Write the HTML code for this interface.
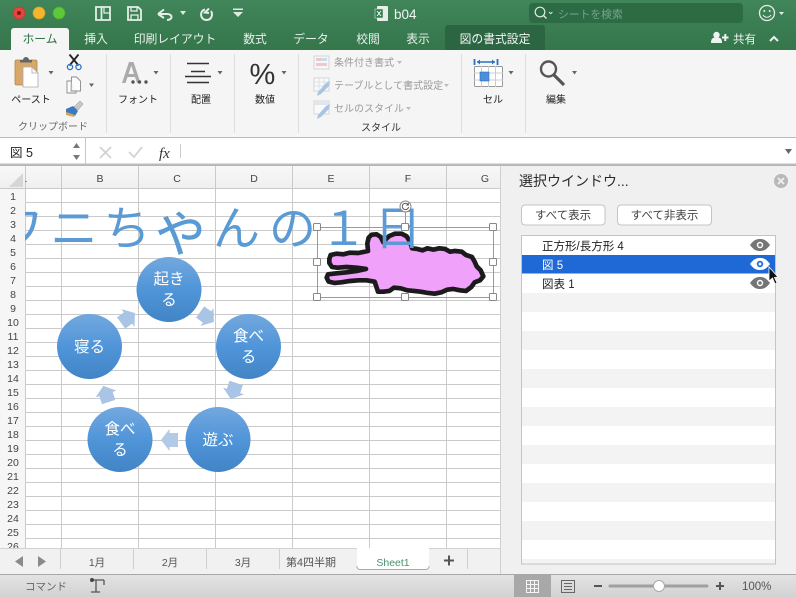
<!DOCTYPE html>
<html lang="ja"><head><meta charset="utf-8"><title>b04</title>
<style>
html,body{margin:0;padding:0;background:#f0f0f0;width:796px;height:597px;overflow:hidden}
svg{display:block}
text{font-family:"Liberation Sans","Noto Sans CJK JP",sans-serif;font-size:11px;fill:#222}
.tab{font-size:11.8px;fill:#e8f1ea;text-anchor:middle}
.lab{font-size:10px;fill:#222;text-anchor:middle}
.hd{font-size:10.5px;fill:#444;text-anchor:middle}
.rn{font-size:10.5px;fill:#444;text-anchor:middle}
.st{font-size:10px;fill:#9a9a9a}
.c{font-size:15.5px;fill:#fff;text-anchor:middle}
.sh{font-size:10.5px;fill:#555;text-anchor:middle}
.w{fill:#5b9bd5;font-size:47px}
</style></head><body>
<svg width="796" height="597" viewBox="0 0 796 597" xmlns="http://www.w3.org/2000/svg">
<defs>
<linearGradient id="tb" x1="0" y1="0" x2="0" y2="1"><stop offset="0" stop-color="#41855a"/><stop offset="1" stop-color="#35764b"/></linearGradient>
<linearGradient id="cg" x1="0" y1="0" x2="0" y2="1"><stop offset="0" stop-color="#73a8de"/><stop offset=".5" stop-color="#5095d9"/><stop offset="1" stop-color="#4285c6"/></linearGradient>
<linearGradient id="sb" x1="0" y1="0" x2="0" y2="1"><stop offset="0" stop-color="#e4e4e4"/><stop offset="1" stop-color="#d2d2d2"/></linearGradient>
<linearGradient id="hdr" x1="0" y1="0" x2="0" y2="1"><stop offset="0" stop-color="#f8f8f8"/><stop offset="1" stop-color="#efefef"/></linearGradient>
<clipPath id="gridclip"><rect x="25" y="188" width="475" height="360"/></clipPath>
<path id="eye" d="M-10 0C-6-5.500-3-6 0-6S6-5.500 10 0C6 5.500 3 6 0 6S-6 5.500-10 0Z"/>
<path id="arr" d="M-8.500-7H0V-11L8.500 0 0 11V7H-8.500Z"/>
</defs>

<!-- title bar -->
<rect width="796" height="50" fill="url(#tb)"/>
<circle cx="19" cy="13" r="6" fill="#e2463f" stroke="#c8362f" stroke-width=".7"/><circle cx="19" cy="13" r="2" fill="#7d1a14"/>
<circle cx="39" cy="13" r="6" fill="#f5b52f" stroke="#d89c22" stroke-width=".7"/>
<circle cx="59" cy="13" r="6" fill="#5ec83c" stroke="#4aa92e" stroke-width=".7"/>
<g fill="none" stroke="#e4efe7" stroke-width="1.800">
<path d="M96 7H110V20H96Z"/><path d="M101.500 7V20" /><path d="M104 7V13H110" stroke-width="1.200"/>
<path d="M128 7H138L141 10V20H128Z"/><path d="M131 7V11H137V7M131 20V15H138V20" stroke-width="1.300"/>
<path d="M158 14L164 9.500M158 14L164 18M158 14H167C173 14 173 20 167 20" stroke-width="2"/>
<path d="M209 8.500L205 12.500 209 13M205 9.500C199 11 200 20 206.500 20 212 20 213 14 211 11" stroke-width="2"/>
</g>
<path d="M180 11h6l-3 4zM233 12h10l-5 5zM233 8.500h10v1.500h-10z" fill="#dfeae2"/>
<g><rect x="377" y="6" width="11" height="15" rx="1" fill="#e8efe9"/><rect x="375" y="9" width="8" height="9" fill="#2d7a4a" stroke="#d8e6dc" stroke-width=".6"/><path d="M377 11l4 5M381 11l-4 5" stroke="#fff" stroke-width="1"/></g>
<text x="394" y="19" style="font-size:13.500px;fill:#f1f6f2">b04</text>
<rect x="529" y="3" width="214" height="20" rx="4" fill="#2d6b45"/>
<circle cx="540" cy="12" r="4.800" fill="none" stroke="#dfeae2" stroke-width="1.200"/><path d="M543.500 15.500l3 3" stroke="#dfeae2" stroke-width="1.300"/><path d="M549 12l1.700 1.700 1.700-1.700" stroke="#dfeae2" fill="none"/>
<text x="558" y="18" style="font-size:10.800px;fill:#74a68a">シートを検索</text>
<circle cx="767" cy="13" r="7.500" fill="none" stroke="#e4efe7" stroke-width="1.300"/><circle cx="764.300" cy="11" r="1" fill="#e4efe7"/><circle cx="769.700" cy="11" r="1" fill="#e4efe7"/><path d="M763 15c2 3 6 3 8 0" fill="none" stroke="#e4efe7" stroke-width="1.100"/>
<path d="M779 12h5l-2.500 3z" fill="#e4efe7"/>

<!-- tabs -->
<path d="M11 50V31a3 3 0 0 1 3-3H66a3 3 0 0 1 3 3V50Z" fill="#f5f5f5"/>
<path d="M445 50V28a3 3 0 0 1 3-3H542a3 3 0 0 1 3 3V50Z" fill="#2c6541"/>
<text x="40" y="43" class="tab" style="fill:#2f7149">ホーム</text>
<text x="96" y="43" class="tab">挿入</text>
<text x="175" y="43" class="tab">印刷レイアウト</text>
<text x="255" y="43" class="tab">数式</text>
<text x="311" y="43" class="tab">データ</text>
<text x="368" y="43" class="tab">校閲</text>
<text x="418" y="43" class="tab">表示</text>
<text x="495" y="43" class="tab" style="fill:#f4f8f5">図の書式設定</text>
<circle cx="716.500" cy="35" r="3.200" fill="#eef4f0"/><path d="M711 43c0-5 2-5.500 5.500-5.500s5.500.5 5.500 5.500z" fill="#eef4f0"/><path d="M722 36.500h2.300V34h2v2.500H728.500v2h-2.200V41h-2v-2.500H722z" fill="#eef4f0"/>
<text x="733" y="43" style="font-size:11.500px;fill:#eef4f0">共有</text>
<path d="M770 41l4-4 4 4" fill="none" stroke="#eef4f0" stroke-width="2"/>

<!-- ribbon -->
<rect y="50" width="796" height="87" fill="#f5f5f5"/>
<path d="M0 137.500H796" stroke="#bcbcbc"/>
<g stroke="#dedede"><path d="M106.500 54V133M170.500 54V133M234.500 54V133M298.500 54V133M461.500 54V133M525.500 54V133"/></g>
<!-- paste -->
<rect x="15" y="60" width="22" height="25" rx="1.500" fill="#d8a86a" stroke="#b5854a" stroke-width=".8"/>
<path d="M20 62v-2h3a3 3 0 0 1 6 0h3v2.500H20z" fill="#666"/>
<path d="M23 67h9l6 6v14H23Z" fill="#fff" stroke="#aaa" stroke-width=".8"/><path d="M32 67v6h6" fill="none" stroke="#aaa" stroke-width=".8"/>
<path d="M48.500 71h5l-2.500 3.500z" fill="#666"/>
<text x="31" y="103" class="lab">ペースト</text>
<path d="M69.500 54.500l9 11M78.500 54.500l-9 11" stroke="#222" stroke-width="1.800"/>
<circle cx="70" cy="67" r="2.600" fill="none" stroke="#2c6fc0" stroke-width="1.300"/><circle cx="78.500" cy="67" r="2.600" fill="none" stroke="#2c6fc0" stroke-width="1.300"/>
<path d="M71.500 77h5l4 4v10h-9.500zM71 81h-4v12h9v-2" fill="#fdfdfd" stroke="#8a8a8a" stroke-width=".9"/>
<path d="M89 83.500h5l-2.500 3.500z" fill="#666"/>
<path d="M74 107l6-6 3 3-5 6z" fill="#c9c9c9" stroke="#888" stroke-width=".5"/><path d="M66 109l7-3 5 5-3 5-9-2z" fill="#3b79c4"/><path d="M66 112l9 3-1 2-8-2z" fill="#d4a55d"/>
<text x="53" y="130" class="lab" style="fill:#666">クリップボード</text>
<!-- font -->
<path d="M122 83L129 62H133.500L140.500 83H137L135 77H127.500L125.500 83ZM128.500 74H134L131.300 65.500Z" fill="#aaa" fill-rule="evenodd"/>
<circle cx="133" cy="82" r="1.700" fill="#555"/><circle cx="139.500" cy="82" r="1.700" fill="#555"/><circle cx="146" cy="82" r="1.700" fill="#555"/>
<path d="M153.500 71h5l-2.500 3.500z" fill="#666"/>
<text x="138" y="103" class="lab">フォント</text>
<!-- align -->
<path d="M187 63.500H209M191 71.500H205M185 76.500H211M187 82.500H209" stroke="#333" stroke-width="1.500"/>
<path d="M217.500 71h5l-2.500 3.500z" fill="#666"/>
<text x="201" y="103" class="lab">配置</text>
<!-- pct -->
<text x="249.500" y="84" style="font-size:29px;fill:#333">%</text>
<path d="M281.500 71h5l-2.500 3.500z" fill="#666"/>
<text x="265" y="103" class="lab">数値</text>
<!-- styles -->
<g opacity=".55">
<rect x="314" y="56" width="15" height="13" fill="#fafafa" stroke="#bbb"/><path d="M316 58h6v3h-6zM316 63h11v3h-11z" fill="#e9a6a6"/><path d="M322 58h5v3h-5z" fill="#a9c8e8"/>
<g fill="#fff" stroke="#bbb"><rect x="314" y="78" width="15" height="13"/><rect x="314" y="101" width="15" height="13"/></g>
<path d="M314 82h15M314 86h15M319 78v13M324 78v13" stroke="#c4d4e4" fill="none"/>
<path d="M318 92l8-9 4-2-1 5-8 8-4 2z" fill="#6b9ed3"/>
<path d="M318 115l8-9 4-2-1 5-8 8-4 2z" fill="#6b9ed3"/>
<rect x="315" y="102" width="13" height="3" fill="#c9dcec"/>
</g>
<text x="334" y="66" class="st">条件付き書式</text><path d="M397 61h5l-2.500 3z" fill="#bbb"/>
<text x="334" y="89" class="st">テーブルとして書式設定</text><path d="M444 84h5l-2.500 3z" fill="#bbb"/>
<text x="334" y="112" class="st">セルのスタイル</text><path d="M406 107h5l-2.500 3z" fill="#bbb"/>
<text x="381" y="131" class="lab" style="fill:#333">スタイル</text>
<!-- cell -->
<path d="M474.500 59v6M497.500 59v6" stroke="#2c6fc0" stroke-width="1.800"/><path d="M477 62H495" stroke="#2c6fc0" stroke-width="1.500"/><path d="M480 59.500l-3 2.500 3 2.500zM492 59.500l3 2.500-3 2.500z" fill="#2c6fc0"/>
<rect x="474.500" y="66.500" width="28" height="20" rx="1" fill="#fff" stroke="#999"/><path d="M474 73H503M474 80H503M481.500 66V87M488.500 66V87M495.500 66V87" stroke="#ccc"/>
<rect x="480" y="72" width="9" height="9" fill="#4a8fd8" stroke="#2c6fc0" stroke-width=".6"/>
<path d="M508.500 71h5l-2.500 3.500z" fill="#666"/>
<text x="493" y="103" class="lab">セル</text>
<!-- find -->
<circle cx="548.500" cy="69" r="7.500" fill="none" stroke="#555" stroke-width="2.400"/><path d="M554 75l10 10" stroke="#555" stroke-width="3.200"/>
<path d="M572 71h5l-2.500 3.500z" fill="#666"/>
<text x="556" y="103" class="lab">編集</text>

<!-- formula bar -->
<rect y="138" width="796" height="26" fill="#fff"/>
<path d="M0 164.500H796" stroke="#bcbcbc" stroke-width="2"/>
<path d="M85.500 138V164" stroke="#c8c8c8"/>
<text x="10" y="157" style="font-size:12.500px">図 5</text>
<path d="M73 148l3.500-5 3.500 5zM73 155l3.500 5 3.500-5z" fill="#777"/>
<path d="M100 147l11 11M111 147l-11 11" stroke="#d2d2d2" stroke-width="1.800"/>
<path d="M129 152l5 5 8-10" fill="none" stroke="#d2d2d2" stroke-width="1.800"/>
<text x="159" y="158" style="font-family:'Liberation Serif',serif;font-style:italic;font-size:15px;fill:#333">fx</text>
<path d="M180.500 144V158" stroke="#ccc"/>
<path d="M785 149h7l-3.500 5z" fill="#666"/>

<!-- sheet -->
<rect y="166" width="501" height="382" fill="#fff"/>
<rect y="166" width="501" height="22" fill="url(#hdr)"/>
<rect y="188" width="25" height="360" fill="#f6f6f6"/>
<path d="M9 187L23 173V187Z" fill="#d6d6d6"/>
<path d="M25.500 166V548M61.500 166V548M138.500 166V548M215.500 166V548M292.500 166V548M369.500 166V548M446.500 166V548M500.500 166V548" stroke="#cacaca"/>
<path d="M0 188.500H500M25 202.500H500M25 216.500H500M25 230.500H500M25 244.500H500M25 258.500H500M25 272.500H500M25 286.500H500M25 300.500H500M25 314.500H500M25 328.500H500M25 342.500H500M25 356.500H500M25 370.500H500M25 384.500H500M25 398.500H500M25 412.500H500M25 426.500H500M25 440.500H500M25 454.500H500M25 468.500H500M25 482.500H500M25 496.500H500M25 510.500H500M25 524.500H500M25 538.500H500" stroke="#cacaca"/>
<text x="26" y="182" class="hd">.</text>
<text x="100" y="182" class="hd">B</text><text x="177" y="182" class="hd">C</text><text x="254" y="182" class="hd">D</text><text x="331" y="182" class="hd">E</text><text x="408" y="182" class="hd">F</text><text x="485" y="182" class="hd">G</text>
<g>
<text x="13" y="200" class="rn">1</text><text x="13" y="214" class="rn">2</text><text x="13" y="228" class="rn">3</text><text x="13" y="242" class="rn">4</text><text x="13" y="256" class="rn">5</text><text x="13" y="270" class="rn">6</text><text x="13" y="284" class="rn">7</text><text x="13" y="298" class="rn">8</text><text x="13" y="312" class="rn">9</text><text x="13" y="326" class="rn">10</text><text x="13" y="340" class="rn">11</text><text x="13" y="354" class="rn">12</text><text x="13" y="368" class="rn">13</text><text x="13" y="382" class="rn">14</text><text x="13" y="396" class="rn">15</text><text x="13" y="410" class="rn">16</text><text x="13" y="424" class="rn">17</text><text x="13" y="438" class="rn">18</text><text x="13" y="452" class="rn">19</text><text x="13" y="466" class="rn">20</text><text x="13" y="480" class="rn">21</text><text x="13" y="494" class="rn">22</text><text x="13" y="508" class="rn">23</text><text x="13" y="522" class="rn">24</text><text x="13" y="536" class="rn">25</text><text x="13" y="550" class="rn">26</text>
</g>
<rect y="548" width="501" height="26" fill="#f1f1f1"/>

<!-- pink shape -->
<g transform="translate(300 165) scale(.3333)">
<path d="M92 270L110 266 130 268 150 263 175 264 204 258 202 235 206 218 215 209 230 208 242 216 250 232 258 222 268 213 285 206 305 206 320 214 330 230 336 250 352 252 368 256 382 250 400 254 418 250 435 252 450 260 465 258 485 260 498 270 516 276 524 290 530 304 542 316 550 334 540 346 524 352 514 366 498 378 480 376 460 372 442 374 424 382 404 386 384 384 362 380 342 378 322 376 302 370 282 368 268 378 250 380 234 380 228 362 224 350 200 346 176 346 150 348 124 352 104 354 86 350 80 338 84 328 110 325 140 322 170 318 198 312 170 308 140 306 112 308 96 306 88 294 88 282Z" fill="#f0a1f9" stroke="#1d1a1d" stroke-width="14" stroke-linejoin="round"/>
</g>

<!-- title wordart -->
<g clip-path="url(#gridclip)">
<text x="-3.500" y="245" class="w">ワ</text>
<text x="50.500" y="245" class="w">ニ</text>
<text x="103.500" y="245" class="w">ち</text>
<text x="151" y="250" class="w" style="font-size:60px">ゃ</text>
<text x="213" y="245" class="w">ん</text>
<text x="269" y="245" class="w">の</text>
<text x="320" y="245" class="w">１</text>
<text x="374.500" y="245" class="w">日</text>
</g>

<!-- selection -->
<path d="M405.500 212V228" stroke="#999"/>
<rect x="317.500" y="227.500" width="176" height="70" fill="none" stroke="#9a9a9a"/>
<g fill="#fff" stroke="#888">
<rect x="313.500" y="223.500" width="7" height="7" rx="1"/><rect x="401.500" y="223.500" width="7" height="7" rx="1"/><rect x="489.500" y="223.500" width="7" height="7" rx="1"/>
<rect x="313.500" y="258.500" width="7" height="7" rx="1"/><rect x="489.500" y="258.500" width="7" height="7" rx="1"/>
<rect x="313.500" y="293.500" width="7" height="7" rx="1"/><rect x="401.500" y="293.500" width="7" height="7" rx="1"/><rect x="489.500" y="293.500" width="7" height="7" rx="1"/>
<circle cx="405.500" cy="206.500" r="5.500"/>
</g>
<path d="M408 204.500a3.200 3.200 0 1 0 .6 2.500" fill="none" stroke="#555" stroke-width="1"/><path d="M408.800 202.500v3h-3z" fill="#555"/>

<!-- smartart -->
<use href="#arr" transform="translate(207 317) rotate(36)" fill="#a9c4e4"/>
<use href="#arr" transform="translate(233.500 391) rotate(108)" fill="#a9c4e4"/>
<use href="#arr" transform="translate(169.500 440) rotate(180)" fill="#b0cae8"/>
<use href="#arr" transform="translate(106 394) rotate(252)" fill="#a9c4e4"/>
<use href="#arr" transform="translate(128 318) rotate(324)" fill="#a9c4e4"/>
<circle cx="169" cy="289.500" r="32.500" fill="url(#cg)"/>
<circle cx="248.500" cy="346.500" r="32.500" fill="url(#cg)"/>
<circle cx="218" cy="439.500" r="32.500" fill="url(#cg)"/>
<circle cx="120" cy="439.500" r="32.500" fill="url(#cg)"/>
<circle cx="89.500" cy="346.500" r="32.500" fill="url(#cg)"/>
<text x="169" y="284" class="c">起き</text><text x="169" y="305" class="c">る</text>
<text x="248.500" y="341" class="c">食べ</text><text x="248.500" y="362" class="c">る</text>
<text x="218" y="445" class="c">遊ぶ</text>
<text x="120" y="434" class="c">食べ</text><text x="120" y="455" class="c">る</text>
<text x="89.500" y="352" class="c">寝る</text>

<!-- sheet tabs -->
<path d="M0 548.500H357M429 548.500H500" stroke="#d2d2d2"/>
<path d="M23 556v11l-8-5.500zM38 556v11l8-5.500z" fill="#8a8a8a"/>
<path d="M60.500 549V569M133.500 549V569M206.500 549V569M279.500 549V569M467.500 549V569" stroke="#cfcfcf"/>
<text x="97" y="566" class="sh">1月</text><text x="170" y="566" class="sh">2月</text><text x="243" y="566" class="sh">3月</text><text x="311" y="566" class="sh" style="font-size:11px">第4四半期</text>
<path d="M357 548V566a3 3 0 0 0 3 3H426a3 3 0 0 0 3-3V548Z" fill="#fff"/>
<path d="M357 566a3 3 0 0 0 3 3.500H426a3 3 0 0 0 3-3.500" fill="none" stroke="#aaa"/>
<text x="393" y="566" class="sh" style="fill:#4a8f68">Sheet1</text>
<path d="M444 560.500H454M449 555.500V565.500" stroke="#555" stroke-width="2"/>

<!-- panel -->
<rect x="501" y="166" width="295" height="408" fill="#f0f0f0"/>
<path d="M0 165.500H796" stroke="#b5b5b5"/>
<path d="M500.500 166V574" stroke="#cfcfcf"/>
<text x="519" y="186" style="font-size:14px;fill:#2a2a2a">選択ウインドウ...</text>
<circle cx="781" cy="181" r="7" fill="#b8b8b8"/><path d="M778 178l6 6M784 178l-6 6" stroke="#f0f0f0" stroke-width="1.800"/>
<rect x="521.500" y="205" width="83.500" height="20" rx="3.500" fill="#fff" stroke="#c4c4c4"/>
<rect x="617.500" y="205" width="94" height="20" rx="3.500" fill="#fff" stroke="#c4c4c4"/>
<text x="563" y="219" text-anchor="middle" style="font-size:11.500px;fill:#444">すべて表示</text>
<text x="664.500" y="219" text-anchor="middle" style="font-size:11.500px;fill:#444">すべて非表示</text>
<rect x="522" y="235" width="253" height="329" fill="#fff"/>
<g fill="#f3f3f3"><rect x="522" y="293" width="253" height="19"/><rect x="522" y="331" width="253" height="19"/><rect x="522" y="369" width="253" height="19"/><rect x="522" y="407" width="253" height="19"/><rect x="522" y="445" width="253" height="19"/><rect x="522" y="483" width="253" height="19"/><rect x="522" y="521" width="253" height="19"/><rect x="522" y="559" width="253" height="5"/></g>
<rect x="522" y="255" width="254" height="18.500" fill="#1e69d6"/>
<rect x="521.500" y="235.500" width="254" height="328.500" fill="none" stroke="#c4c4c4"/>
<text x="542" y="250" style="font-size:11.500px">正方形/長方形 4</text>
<text x="542" y="269" style="font-size:11.500px;fill:#fff">図 5</text>
<text x="542" y="288" style="font-size:11.500px">図表 1</text>
<use href="#eye" transform="translate(760 245)" fill="#757575"/><circle cx="760" cy="245" r="3.200" fill="#fff"/><circle cx="760" cy="245" r="1.800" fill="#757575"/>
<use href="#eye" transform="translate(760 264)" fill="#fff"/><circle cx="760" cy="264" r="3.200" fill="#1e69d6"/><circle cx="760" cy="264" r="1.500" fill="#fff"/>
<use href="#eye" transform="translate(760 283)" fill="#757575"/><circle cx="760" cy="283" r="3.200" fill="#fff"/><circle cx="760" cy="283" r="1.800" fill="#757575"/>
<path d="M769 267V281L772.500 278 775 284 777 283 774.500 277.500 778 277Z" fill="#111" stroke="#fff" stroke-width=".8"/>

<!-- status bar -->
<rect y="574" width="796" height="23" fill="url(#sb)"/>
<path d="M0 574.500H796" stroke="#a8a8a8"/>
<text x="25" y="590" style="font-size:10.500px;fill:#666">コマンド</text>
<path d="M92 580h12M96 580v12M91 592h9" stroke="#555" stroke-width="1.300" fill="none"/><circle cx="92" cy="580" r="2" fill="#444"/><path d="M104 580v5" stroke="#555" stroke-width="1.300"/>
<rect x="514" y="575" width="37" height="22" fill="#a8a8a8"/>
<path d="M526.500 580.500h12v12h-12zM526.500 584.500h12M526.500 588.500h12M530.500 580.500v12M534.500 580.500v12" fill="none" stroke="#f5f5f5"/>
<rect x="561.500" y="580.500" width="13" height="12" fill="none" stroke="#666"/><path d="M564 583.500h8M564 586.500h8M564 589.500h8" stroke="#666"/>
<path d="M594 586H602" stroke="#555" stroke-width="2"/>
<path d="M610 586H707" stroke="#a0a0a0" stroke-width="3" stroke-linecap="round"/>
<circle cx="659" cy="586" r="5.500" fill="#fff" stroke="#aaa"/>
<path d="M716 586H724M720 582V590" stroke="#555" stroke-width="2"/>
<text x="742" y="590" style="font-size:11.500px;fill:#555">100%</text>
</svg>
</body></html>
